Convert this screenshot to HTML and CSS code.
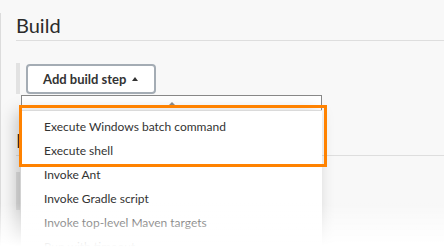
FILE: index.html
```html
<!DOCTYPE html>
<html lang="en">
<head>
    <meta charset="utf-8">
    <title>Build</title>
    <link rel="stylesheet" href="styles.css">
</head>
<body>
    <div class="page">
        <section class="section">
            <h2 class="section-title">Build</h2>
            <div class="step-row step-row-open">
                <span class="step-bar"></span>
                <button class="add-button" type="button">Add build step <span class="caret"></span></button>

                <div class="menu">
                    <div class="menu-top"><span class="scroll-up"></span></div>
                    <ul class="menu-list">
                        <li>Execute Windows batch command</li>
                        <li>Execute shell</li>
                        <li>Invoke Ant</li>
                        <li>Invoke Gradle script</li>
                        <li>Invoke top-level Maven targets</li>
                        <li>Run with timeout</li>
                    </ul>
                </div>

                <div class="highlight"></div>
            </div>
        </section>

        <section class="section section-post">
            <h2 class="section-title">Post-build Actions</h2>
            <div class="step-row step-row-tall">
                <span class="step-bar"></span>
            </div>
        </section>
    </div>
    <div class="fade"></div>
</body>
</html>
```

FILE: styles.css
```css
* { padding: 0; margin: 0; box-sizing: border-box; }
html, body {
    height: 100%;
    overflow: hidden;
}
body {
    font-family: Lato, "Open Sans", Arial, sans-serif;
    background-color: #f8f8f8;
    color: #333;
}
.page {
    border-left: 1px solid #dcdcdc;
    height: 100%;
    padding-left: 15px;
}
.section-title {
    font-size: 20px;
    font-weight: normal;
    line-height: 24px;
    color: #2b2b2b;
    margin-top: 13px;
    padding-bottom: 3px;
    border-bottom: 1px solid #dedede;
}
.section-post .section-title {
    margin-top: 34px;
}
.step-row {
    display: flex;
    align-items: flex-end;
    gap: 6px;
    margin-top: 22px;
}
.step-row-open {
    position: relative; /* anchor for the open menu */
    z-index: 2;
}
.step-row-tall {
    margin-top: 16px;
}
.step-bar {
    width: 4px;
    height: 31px;
    background-color: #e2e2e2;
}
.step-row-tall .step-bar { height: 38px; }
.add-button {
    display: flex;
    align-items: center;
    gap: 6px;
    height: 30px;
    padding: 0 16px 0 15px;
    border: 2px solid #a4acb4;
    border-radius: 4px;
    background-color: #fff;
    font-family: inherit;
    font-size: 13px;
    font-weight: bold;
    color: #333;
}
.caret {
    width: 0;
    height: 0;
    border-left: 3.5px solid transparent;
    border-right: 3.5px solid transparent;
    border-bottom: 4px solid #333;
}

/* dropdown opened under the button */
.menu {
    position: absolute;
    top: 32px;
    left: 5px;
    width: 301px;
    border: 1px solid #888;
    border-bottom: none;
    background-color: #fff;
}
.menu-top {
    height: 14px;
    display: flex;
    justify-content: center;
    padding-top: 6px;
}
.scroll-up {
    width: 0;
    height: 0;
    border-left: 3px solid transparent;
    border-right: 3px solid transparent;
    border-bottom: 3px solid #888;
}
.menu-list {
    list-style: none;
    margin: 0 -1px;
    padding-top: 4px;
    border-top: 1px solid #dadada;
    background-color: #fff;
    box-shadow: -5px 2px 16px rgba(0, 0, 0, 0.22);
}
.menu-list li {
    font-size: 12px;
    line-height: 24px;
    padding-left: 23px;
    color: #333;
    white-space: nowrap;
}

/* orange annotation round the two shell items */
.highlight {
    position: absolute;
    top: 42px;
    left: 3px;
    width: 308px;
    height: 62px;
    border: 3px solid #ff8200;
}

.fade {
    position: fixed;
    z-index: 3;
    left: 0;
    right: 0;
    bottom: 0;
    height: 46px;
    background: linear-gradient(to bottom, rgba(255, 255, 255, 0), #fff 95%);
}
```
